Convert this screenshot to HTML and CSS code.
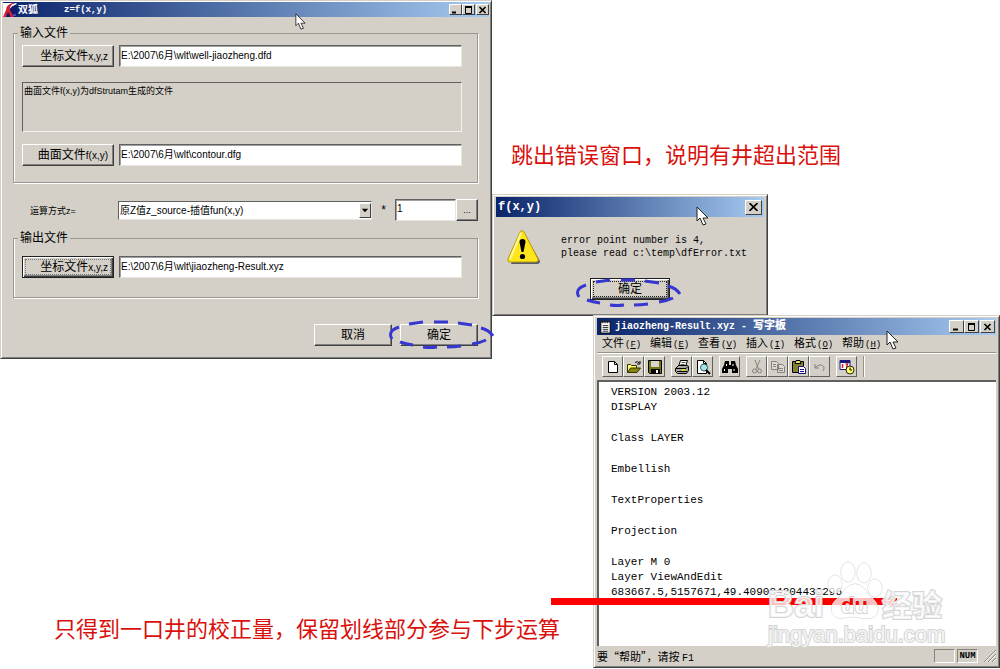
FILE: index.html
```html
<!DOCTYPE html>
<html lang="zh-CN">
<head>
    <meta charset="UTF-8">
    <title>z=f(x,y)</title>
    <link rel="stylesheet" href="styles.css">
</head>
<body>

<main class="desktop">

    <!-- main form -->
    <section class="window win-main">
        <header class="titlebar">
            <svg class="logo" viewBox="0 0 14 14">
                <rect width="14" height="14" fill="#101a70"/>
                <path d="M0 0H10Q4 3 4 7L1 14H0Z" fill="#fff"/>
                <path d="M13 0Q7 1 6 4L6 7Q8 3 14 1Z" fill="#fff"/>
                <path d="M11 0Q3 1 3 7L0 14H3L5 9 8 14H11L7 7Q6 3 11 0Z" fill="#d42030"/>
                <path d="M10 12h3" stroke="#6a8bff"/>
            </svg>
            <h1>双狐</h1>
            <span class="formula">z=f(x,y)</span>
            <div class="controls">
                <button class="ctl" aria-label="最小化"><svg viewBox="0 0 9 8"><path d="M1 6.5h4" stroke="#000" stroke-width="2"/></svg></button>
                <button class="ctl" aria-label="最大化"><svg viewBox="0 0 9 8"><path d="M1 1.5h7M1.5 1v6.5h6V1" fill="none" stroke="#000"/><path d="M1 1h7" stroke="#000" stroke-width="2"/></svg></button>
                <button class="ctl close" aria-label="关闭"><svg viewBox="0 0 9 8"><path d="M1.5 1l6 6M7.5 1l-6 6" stroke="#000" stroke-width="1.6"/></svg></button>
            </div>
        </header>

        <form class="form">
            <fieldset class="group">
                <legend>输入文件</legend>
                <div class="row">
                    <button type="button" class="btn file">坐标文件<small>x,y,z</small></button>
                    <input class="field" aria-label="坐标文件" value="E:\2007\6月\wlt\well-jiaozheng.dfd">
                </div>
                <p class="note">曲面文件f(x,y)为dfStrutam生成的文件</p>
                <div class="row">
                    <button type="button" class="btn file">曲面文件<small>f(x,y)</small></button>
                    <input class="field" aria-label="曲面文件" value="E:\2007\6月\wlt\contour.dfg">
                </div>
            </fieldset>

            <div class="row calc">
                <label for="mode">运算方式z=</label>
                <div class="combo">
                    <select id="mode"><option>原Z值z_source-插值fun(x,y)</option></select>
                    <svg class="arrow" viewBox="0 0 11 14"><path d="M2 5h7L5.5 9z"/></svg>
                </div>
                <span class="times">*</span>
                <input class="field factor" aria-label="系数" value="1">
                <button type="button" class="btn more">...</button>
            </div>

            <fieldset class="group output">
                <legend>输出文件</legend>
                <div class="row">
                    <button type="button" class="btn file default">坐标文件<small>x,y,z</small></button>
                    <input class="field" aria-label="输出文件" value="E:\2007\6月\wlt\jiaozheng-Result.xyz">
                </div>
            </fieldset>

            <div class="actions">
                <button type="button" class="btn">取消</button>
                <button type="button" class="btn marked">确定
                    <svg class="ring" viewBox="0 0 106 30"><path d="M4 19Q-1 11 11 7M21 4Q28 3 35 2M46 2H60M70 3Q77 4 84 5M93 8Q101 10 105 16M98 20Q92 23 84 24M73 26Q66 27 59 27M49 27Q42 28 35 27M25 25Q18 24 12 22"/></svg>
                </button>
            </div>
        </form>
        <svg class="cursor cur-main" viewBox="0 0 13 20"><path d="M1 1v14l3-3 3 7 3-1-3-6h5z"/></svg>
    </section>

    <!-- error message -->
    <section class="window win-error">
        <header class="titlebar">
            <h2>f(x,y)</h2>
            <div class="controls">
                <button class="ctl" aria-label="关闭"><svg viewBox="0 0 9 8"><path d="M.5 0l8 8M8.5 0l-8 8" stroke="#000" stroke-width="1.6"/></svg></button>
            </div>
        </header>
        <div class="message">
            <svg class="warn" viewBox="0 0 34 34">
                <path d="M17 3L33 31Q33 34 30 34H4Z" fill="#555a70"/>
                <path d="M13 2Q15-1 17 2L31 29Q32 32 29 32H3Q0 32 1 29Z" fill="#ffe51c" stroke="#b99b00"/>
                <path d="M14 3L3 29" stroke="#fff89a" stroke-width="2"/>
                <path d="M12.5 12Q12.5 9 15.5 9T18.5 12L16.5 22H14.5Z"/>
                <circle cx="15.5" cy="26.5" r="2.6"/>
            </svg>
            <p>error point number is 4,<br>please read c:\temp\dfError.txt</p>
        </div>
        <div class="confirm">
            <button type="button" class="btn default focus marked"><span>确定</span>
                <svg class="ring" viewBox="0 0 106 30"><path d="M4 19Q-1 11 11 7M21 4Q28 3 35 2M46 2H60M70 3Q77 4 84 5M93 8Q101 10 105 16M98 20Q92 23 84 24M73 26Q66 27 59 27M49 27Q42 28 35 27M25 25Q18 24 12 22"/></svg>
            </button>
        </div>
        <svg class="cursor cur-error" viewBox="0 0 13 20"><path d="M1 1v14l3-3 3 7 3-1-3-6h5z"/></svg>
    </section>

    <!-- wordpad -->
    <section class="window win-pad">
        <header class="titlebar">
            <svg class="padicon" viewBox="0 0 14 14"><rect x="2" y="1.5" width="10" height="12" fill="#fff" stroke="#000"/><path d="M4 0v3M6.5 0v3M9 0v3M4 5.5h6M4 7.5h6M4 9.5h6M4 11.5h6" stroke="#222"/></svg>
            <h2>jiaozheng-Result.xyz - <b>写字板</b></h2>
            <div class="controls">
                <button class="ctl" aria-label="最小化"><svg viewBox="0 0 9 8"><path d="M1 6.5h5" stroke="#000" stroke-width="2"/></svg></button>
                <button class="ctl" aria-label="最大化"><svg viewBox="0 0 9 8"><path d="M1 1.5h7M1.5 1v6.5h6V1" fill="none" stroke="#000"/><path d="M1 1h7" stroke="#000" stroke-width="2"/></svg></button>
                <button class="ctl close" aria-label="关闭"><svg viewBox="0 0 9 8"><path d="M1.5 1l6 6M7.5 1l-6 6" stroke="#000" stroke-width="1.6"/></svg></button>
            </div>
        </header>
        <nav class="menu">
            <a href="#">文件<span>(<u>F</u>)</span></a>
            <a href="#">编辑<span>(<u>E</u>)</span></a>
            <a href="#">查看<span>(<u>V</u>)</span></a>
            <a href="#">插入<span>(<u>I</u>)</span></a>
            <a href="#">格式<span>(<u>O</u>)</span></a>
            <a href="#">帮助<span>(<u>H</u>)</span></a>
        </nav>
        <div class="toolbar">
            <div class="tools">
                <button class="tool" aria-label="新建"><svg viewBox="0 0 16 16"><path d="M3.5 2.5h6l3 3v8h-9z" fill="#fff" stroke="#000"/><path d="M9.5 2.5v3h3" fill="none" stroke="#000"/></svg></button>
                <button class="tool" aria-label="打开"><svg viewBox="0 0 16 16"><path d="M1.5 13.5v-8h3l1 1h5v3" fill="#ffff70" stroke="#333300"/><path d="M1.5 13.5l3-4.5h10l-3.5 4.5z" fill="#8a8510" stroke="#333300"/><path d="M9 3.5q2.5-2 4.5.5M14 2v3h-3" fill="none" stroke="#000"/></svg></button>
                <button class="tool" aria-label="保存"><svg viewBox="0 0 16 16"><path d="M1.5 1.5h13v13h-12l-1-1z" fill="#77740d" stroke="#000"/><path d="M4 2h8v6H4z" fill="#d8d5cc"/><path d="M4 10h9v4H4z"/><path d="M9 11h2v3H9z" fill="#fff"/></svg></button>
            </div>
            <div class="tools">
                <button class="tool" aria-label="打印"><svg viewBox="0 0 16 16"><path d="M4.5 7.5l2-6h7l-2 6z" fill="#fff" stroke="#000"/><path d="M7.5 3.5h4M6.5 5.5h4" stroke="#555"/><path d="M1.5 9.5l3-3h9l1 1v4l-2 3h-9l-2-2z" fill="#aaa79d" stroke="#000"/><path d="M2 9.5h10l2-2M3 12.5h10" fill="none" stroke="#000"/><path d="M8 11h3" stroke="#dddd20" stroke-width="2"/></svg></button>
                <button class="tool" aria-label="打印预览"><svg viewBox="0 0 16 16"><path d="M2.5 1.5h6l3 3v10h-9z" fill="#fff" stroke="#000"/><path d="M8.5 1.5v3h3" fill="none" stroke="#000"/><circle cx="9" cy="8.5" r="3.5" fill="#a7e6e6" stroke="#285b60"/><path d="M11 11l4 4" stroke="#000" stroke-width="2"/></svg></button>
            </div>
            <div class="tools">
                <button class="tool" aria-label="查找"><svg viewBox="0 0 16 16"><path d="M3 2h4v4h2V2h4l1 4 2 4v4h-6v-4H6v4H0v-4l2-4z"/><path d="M4.5 5v2M11 5v2M2.5 10v2M12 10v2" stroke="#fff"/></svg></button>
            </div>
            <div class="tools">
                <button class="tool" aria-label="剪切"><svg viewBox="0 0 16 16" fill="none" stroke="#85827b"><path d="M6 1l3.5 9M11 1L7 10"/><circle cx="5.5" cy="12" r="2"/><circle cx="10.5" cy="12" r="2"/></svg></button>
                <button class="tool" aria-label="复制"><svg viewBox="0 0 16 16" fill="#dedbd3" stroke="#85827b"><path d="M1.5 2.5h5l2 2v6h-7zM7.5 5.5h5l2 2v6h-7z"/><path d="M3 5.5h3M3 7.5h3M9 9.5h4M9 11.5h4"/></svg></button>
                <button class="tool" aria-label="粘贴"><svg viewBox="0 0 16 16"><path d="M1.5 2.5h11v11h-11z" fill="#85812a" stroke="#000"/><path d="M4 4.5h6l-1-3H5z" fill="#e7df72" stroke="#000"/><path d="M7.5 7.5h5l2 2v5h-7z" fill="#fff" stroke="#17177d"/><path d="M9 10.5h4M9 12.5h4" stroke="#17177d"/></svg></button>
                <button class="tool" aria-label="撤消"><svg viewBox="0 0 16 16"><path d="M3 9q2-3 5-3c4 0 5 3 3 6M3 5v4h4" fill="none" stroke="#85827b"/></svg></button>
            </div>
            <div class="tools">
                <button class="tool" aria-label="日期/时间"><svg viewBox="0 0 16 16"><path d="M1 1.5h10v9H1z" fill="#fff" stroke="#17177d"/><path d="M1 2.5h10" stroke="#17177d" stroke-width="3"/><path d="M3.5 5v4M6.5 5h2l-1 4" fill="none" stroke="#d02030" stroke-width="1.5"/><circle cx="11" cy="11" r="4" fill="#ffff60" stroke="#222"/><path d="M11 8.5V11h2" fill="none" stroke="#000"/></svg></button>
            </div>
            <i class="sep"></i>
        </div>
        <article class="doc">
            <p>VERSION 2003.12<br>DISPLAY</p>
            <p>Class LAYER</p>
            <p>Embellish</p>
            <p>TextProperties</p>
            <p>Projection</p>
            <p>Layer M 0<br>Layer ViewAndEdit<br>683667.5,5157671,49.409084204439296</p>
        </article>
        <footer class="status">
            <span class="hint">要“帮助”，请按 <code>F1</code></span>
            <span class="cell"></span>
            <span class="cell">NUM</span>
            <svg class="grip" viewBox="0 0 12 12"><path d="M0 12L12 0M4 12l8-8M8 12l4-4" stroke="#85827b"/><path d="M1 12L12 1M5 12l7-7M9 12l3-3" stroke="#fff"/></svg>
        </footer>
        <svg class="cursor cur-pad" viewBox="0 0 13 20"><path d="M1 1v14l3-3 3 7 3-1-3-6h5z"/></svg>
    </section>

    <!-- annotations -->
    <p class="caption cap-error">跳出错误窗口，说明有井超出范围</p>
    <p class="caption cap-result">只得到一口井的校正量，保留划线部分参与下步运算</p>
    <div class="underline"></div>

    <svg class="watermark" viewBox="0 0 184 90">
        <defs>
            <!-- the red line stays visible through the letters on the paw -->
            <linearGradient id="through" gradientUnits="userSpaceOnUse" x1="0" y1="38" x2="0" y2="45">
                <stop offset="0" stop-color="#fff"/>
                <stop offset="0" stop-color="#f00"/>
                <stop offset="1" stop-color="#f00"/>
                <stop offset="1" stop-color="#fff"/>
            </linearGradient>
        </defs>
        <g class="paw">
            <ellipse cx="69" cy="24" rx="7" ry="9"/>
            <ellipse cx="82" cy="12" rx="7" ry="10"/>
            <ellipse cx="98" cy="13" rx="7" ry="10"/>
            <ellipse cx="109" cy="28" rx="7" ry="9"/>
            <path d="M89 24c-9 0-11 9-18 15-9 7-6 18 2 19 6 1 10-2 16-1s10 2 16 1c8-1 10-12 2-19-7-6-9-15-18-15z"/>
        </g>
        <text class="bai" x="2" y="57">Bai</text>
        <text class="du" x="75" y="53">du</text>
        <text class="exp" x="116" y="56">经验</text>
        <text class="url" x="2" y="82">jingyan.baidu.com</text>
    </svg>
</main>

</body>
</html>
```
FILE: styles.css
```css
* {
    box-sizing: border-box;
}
body {
    margin: 0;
    background: #fff;
    color: #000;
    font-family: "Liberation Sans", "Noto Sans CJK SC", sans-serif;
    font-size: 12px;
}
h1, h2, p {
    margin: 0;
}
button, input, select {
    font-family: inherit;
    color: inherit;
}
svg {
    display: block;
}
.desktop {
    position: relative;
    min-height: 100vh;
    overflow: hidden;
}

/* windows */
.window {
    position: absolute;
    display: flex;
    flex-direction: column;
    background: #d4d0c8;
    border: 1px solid #d4d0c8;
    border-right-color: #404040;
    border-bottom-color: #404040;
    box-shadow: inset 1px 1px #fff, inset -1px -1px #808080;
}
.win-main {
    left: 0;
    top: 0;
    width: 492px;
    padding: 1px 2px 12px;
}
.win-error {
    left: 492px;
    top: 194px;
    width: 276px;
    height: 122px;
    padding: 2px 3px;
}
.win-pad {
    left: 593px;
    top: 315px;
    width: 407px;
    height: 353px;
    padding: 2px 3px;
}
.titlebar {
    display: flex;
    align-items: center;
    height: 15px;
    background: linear-gradient(to right, #0a246a, #a6caf0);
    color: #fff;
    line-height: 14px;
}
.titlebar h1 {
    margin-left: 1px;
    width: 46px;
    font-size: 10px;
}
.titlebar h2 {
    font-family: "Liberation Mono", "Noto Sans CJK SC", monospace;
    font-size: 12px;
}
.formula {
    font: bold 9px "Liberation Mono", monospace;
}
.logo {
    width: 14px;
    height: 14px;
}
.win-error .titlebar {
    height: 20px;
    padding: 0 2px;
}
.win-pad .titlebar {
    height: 17px;
    padding: 0 1px 0 2px;
}
.win-pad h2 {
    font-size: 10px;
    margin-left: 3px;
}
.win-pad h2 b {
    font-size: 11px;
}
.padicon {
    width: 13px;
    height: 14px;
}
.controls {
    display: flex;
    margin-left: auto;
}
.ctl {
    display: flex;
    align-items: center;
    justify-content: center;
    width: 13px;
    height: 11px;
    padding: 0;
    background: #d4d0c8;
    border: 1px solid #fff;
    border-right-color: #404040;
    border-bottom-color: #404040;
}
.ctl svg {
    width: 9px;
    height: 8px;
}
.ctl.close {
    margin-left: 1px;
}
.win-error .ctl {
    width: 17px;
    height: 15px;
}
.win-pad .ctl {
    width: 15px;
    height: 13px;
}

/* controls */
.form {
    padding: 9px 11px 0 10px;
}
.group {
    margin: 0;
    padding: 5px 15px 16px 8px;
    min-width: 0;
    border: 1px solid #9a978f;
    box-shadow: 1px 1px #fff, inset 1px 0 #fff;
}
.group legend {
    margin-left: -4px;
    padding: 0 2px;
    line-height: 14px;
    background: #d4d0c8;
}
.row {
    display: flex;
    align-items: center;
    gap: 5px;
}
.btn {
    width: 78px;
    height: 22px;
    padding: 0;
    font-size: 12px;
    line-height: 16px;
    background: #d4d0c8;
    border: 1px solid #fff;
    border-right-color: #404040;
    border-bottom-color: #404040;
    box-shadow: inset -1px -1px #808080;
}
.btn.file {
    width: 92px;
    padding-right: 5px;
    text-align: right;
    white-space: nowrap;
}
.btn small {
    font-size: 10px;
}
.btn.default {
    border-color: #202020;
    box-shadow: inset 1px 1px #fff, inset -1px -1px #404040, inset -2px -2px #808080;
}
.output .btn.default {
    outline: 1px dotted #777;
    outline-offset: -4px;
}
.field {
    flex: 1;
    min-width: 0;
    height: 22px;
    padding: 0 1px 3px;
    background: #fff;
    border: 1px solid #e8e6e1;
    border-top-color: #606060;
    border-left-color: #606060;
    box-shadow: inset 1px 1px #a0a0a0;
    font-size: 10px;
}
.note {
    height: 50px;
    margin: 15px 0 12px;
    padding: 1px;
    border: 1px solid #f4f2ee;
    border-top-color: #606060;
    border-left-color: #606060;
    font-size: 9px;
    line-height: 14px;
}
.calc {
    height: 22px;
    margin: 16px 0 10px;
    padding-left: 17px;
    gap: 0;
    font-size: 9px;
}
.calc label {
    width: 88px;
}
.combo {
    position: relative;
    flex: 1;
}
.combo select {
    display: block;
    width: 100%;
    height: 19px;
    padding: 0 1px;
    appearance: none;
    background: #fff;
    border: 1px solid #e8e6e1;
    border-top-color: #606060;
    border-left-color: #606060;
    border-radius: 0;
    font-size: 10px;
}
.arrow {
    position: absolute;
    right: 1px;
    top: 2px;
    width: 12px;
    height: 15px;
    background: #d4d0c8;
    border: 1px solid #fff;
    border-right-color: #404040;
    border-bottom-color: #404040;
    pointer-events: none;
}
.times {
    width: 23px;
    text-align: center;
    font-size: 12px;
}
.factor {
    flex: none;
    width: 61px;
}
.btn.more {
    width: 22px;
    font-size: 9px;
}
.output {
    padding-top: 11px;
    padding-bottom: 19px;
}
.actions {
    display: flex;
    justify-content: flex-end;
    gap: 8px;
    margin-top: 26px;
}
.marked {
    position: relative;
}
.ring {
    position: absolute;
    left: -13px;
    top: -5px;
    width: 106px;
    height: 30px;
    fill: none;
    stroke: #3636d0;
    stroke-width: 3;
}

/* message */
.message {
    display: flex;
    gap: 20px;
    padding: 13px 10px 0 11px;
}
.message p {
    padding-top: 4px;
    font: 10px/13px "Liberation Mono", monospace;
    white-space: nowrap;
}
.warn {
    width: 34px;
    height: 34px;
}
.confirm {
    display: flex;
    justify-content: center;
    margin-top: 14px;
}
.confirm .btn {
    width: 80px;
}
.confirm .ring {
    left: -16px;
    top: -1px;
}
.focus span {
    display: block;
    margin: 0 3px;
    outline: 1px dotted #222;
    line-height: 14px;
}

/* wordpad */
.menu {
    display: flex;
    height: 18px;
    padding-left: 5px;
    border-bottom: 1px solid #96938b;
    box-shadow: 0 1px #fff;
}
.menu a {
    width: 48px;
    color: #000;
    font-size: 11px;
    line-height: 17px;
    text-decoration: none;
    white-space: nowrap;
}
.menu span {
    margin-left: 1px;
    font: 9px "Liberation Mono", monospace;
}
.toolbar {
    display: flex;
    gap: 6px;
    padding: 3px 0 3px 5px;
}
.tools {
    display: flex;
}
.tool {
    display: flex;
    align-items: center;
    justify-content: center;
    width: 21px;
    height: 21px;
    padding: 0;
    background: #d4d0c8;
    border: 1px solid #fff;
    border-right-color: #606060;
    border-bottom-color: #606060;
}
.tool svg {
    flex: none;
    width: 16px;
    height: 16px;
}
.sep {
    width: 2px;
    border-left: 1px solid #96938b;
    border-right: 1px solid #fff;
}
.doc {
    flex: 1;
    padding: 3px 12px;
    background: #fff;
    border-top: 2px solid #606060;
    border-left: 2px solid #606060;
    font: 11px/15px "Liberation Mono", monospace;
}
.doc p + p {
    margin-top: 16px;
}
.status {
    display: flex;
    align-items: center;
    gap: 2px;
    height: 19px;
    font-size: 11px;
}
.hint {
    flex: 1;
    font-family: "Noto Sans CJK SC", sans-serif;
    font-size: 11px;
}
.hint code {
    font: 10px "Liberation Mono", monospace;
}
.cell {
    width: 21px;
    height: 14px;
    border: 1px solid #fff;
    border-top-color: #85827b;
    border-left-color: #85827b;
    font: bold 9px/12px "Liberation Mono", monospace;
    text-align: center;
}
.grip {
    width: 12px;
    height: 12px;
    margin-left: 4px;
}

/* pointers */
.cursor {
    position: absolute;
    width: 13px;
    height: 20px;
    fill: #fff;
    stroke: #222;
}
.cur-main {
    left: 294px;
    top: 12px;
    width: 11px;
    height: 17px;
}
.cur-error {
    left: 203px;
    top: 10px;
    height: 22px;
}
.cur-pad {
    left: 292px;
    top: 14px;
}

/* annotations */
.caption {
    position: absolute;
    color: #d9110d;
    font-size: 22px;
    line-height: 30px;
    white-space: nowrap;
}
.cap-error {
    left: 511px;
    top: 141px;
}
.cap-result {
    left: 54px;
    top: 615px;
}
.underline {
    position: absolute;
    left: 551px;
    top: 598px;
    width: 346px;
    height: 7px;
    background: #f00;
}
.watermark {
    position: absolute;
    left: 766px;
    top: 560px;
    width: 184px;
    height: 90px;
    fill: #fff;
    fill-opacity: .75;
    stroke: #d4d4d4;
    stroke-width: 2;
    paint-order: stroke;
    font-family: "Liberation Sans", "Noto Sans CJK SC", sans-serif;
}
.paw {
    stroke-width: 1;
}
.bai {
    font-size: 36px;
    font-weight: bold;
}
.du {
    fill: url(#through);
    fill-opacity: 1;
    font-size: 22px;
    font-weight: bold;
}
.exp {
    font-size: 30px;
    font-weight: bold;
}
.url {
    font-size: 22px;
}
```
